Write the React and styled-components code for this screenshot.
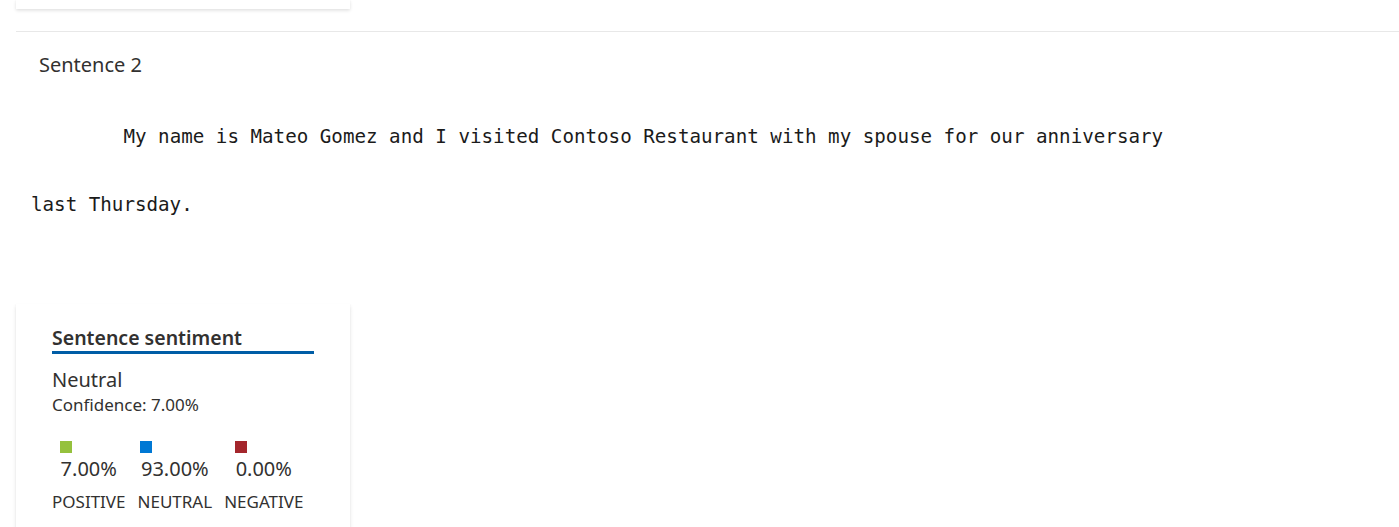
import styled, { createGlobalStyle } from "styled-components";

const GlobalStyle = createGlobalStyle`
  body {
    margin: 0;
    background: #fff;
    font-family: "Noto Sans", "Open Sans", sans-serif;
    color: #323130;
    overflow: hidden;
  }
`;

const Page = styled.div`
  padding-left: 16px;
  display: flex;
  flex-direction: column;
  height: 527px;
  overflow: hidden;
`;

const Card = styled.div`
  width: 334px;
  flex-shrink: 0;
  box-sizing: border-box;
  background: #fff;
  height: ${(props) => props.h || "auto"};
  padding: ${(props) => props.pad || "0"};
  box-shadow: 0 1.6px 3.6px rgba(0, 0, 0, 0.13), 0 0.3px 0.9px rgba(0, 0, 0, 0.11);
`;

const Divider = styled.hr`
  margin: 22px 0 0;
  border: 0;
  border-top: 1px solid #e8e8e8;
`;

const SentenceTitle = styled.div`
  padding: 19px 0 0 23px;
  font-size: 20px;
  line-height: 28px;
`;

const Quote = styled.pre`
  margin: 41px 0 82px;
  padding-left: 15px;
  font-family: "DejaVu Sans Mono", "Liberation Mono", monospace;
  font-size: 19.2px;
  line-height: 34px;
  color: #1b1b1b;
  tab-size: 8;
`;

const CardTitle = styled.div`
  font-size: 19.5px;
  font-weight: 600;
  line-height: 24px;
  padding-bottom: 1px;
  border-bottom: 3px solid #005da6;
`;

const Label = styled.div`
  margin-top: 13px;
  font-size: 20px;
  line-height: 26px;
`;

const Confidence = styled.div`
  margin-top: 1px;
  font-size: 17px;
  line-height: 22px;
`;

const Scores = styled.div`
  display: flex;
  gap: 12px;
  margin-top: 25px;
`;

const Score = styled.div`
  display: flex;
  flex-direction: column;
  align-items: center;
`;

const ScoreValue = styled.div`
  display: flex;
  flex-direction: column;
  align-items: flex-start;
`;

const Swatch = styled.span`
  width: 12px;
  height: 12px;
  margin-left: -1px;
  background: ${(props) => props.color};
`;

const Percent = styled.div`
  font-size: 20px;
  line-height: 31px;
`;

const ScoreName = styled.div`
  margin-top: 7px;
  font-size: 17px;
  line-height: 22px;
  text-transform: uppercase;
`;

const scores = [
  { name: "Positive", value: "7.00%", color: "#95c13d" },
  { name: "Neutral", value: "93.00%", color: "#0078d4" },
  { name: "Negative", value: "0.00%", color: "#a4262c" },
];

export default function App() {
  return (
    <Page>
      <GlobalStyle />
      <Card h="9px" />
      <Divider />
      <SentenceTitle>Sentence 2</SentenceTitle>
      <Quote>{"\tMy name is Mateo Gomez and I visited Contoso Restaurant with my spouse for our anniversary\n\nlast Thursday."}</Quote>
      <Card pad="22px 36px 40px">
        <CardTitle>Sentence sentiment</CardTitle>
        <Label>Neutral</Label>
        <Confidence>Confidence: 7.00%</Confidence>
        <Scores>
          {scores.map((s) => (
            <Score key={s.name}>
              <ScoreValue>
                <Swatch color={s.color} />
                <Percent>{s.value}</Percent>
              </ScoreValue>
              <ScoreName>{s.name}</ScoreName>
            </Score>
          ))}
        </Scores>
      </Card>
    </Page>
  );
}
